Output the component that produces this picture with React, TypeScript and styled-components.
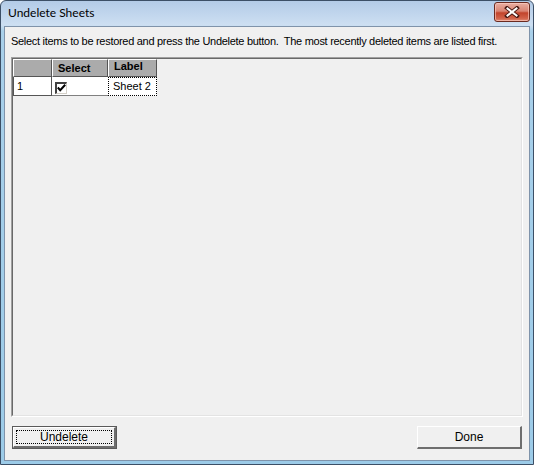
import React from "react";
import styled, { createGlobalStyle } from "styled-components";

const Global = createGlobalStyle`
  html, body { margin: 0; padding: 0; background: #ffffff; }
  #root { width: 534px; height: 465px; }
`;

const Frame = styled.div`
  box-sizing: border-box;
  width: 534px;
  height: 465px;
  border: 1px solid #3c4f66;
  border-radius: 6px 6px 0 0;
  background: linear-gradient(to bottom, #b3cbe7 0px, #cddff2 24px, #a9d0ea 30px, #9ccbe8 100%);
  display: flex;
  flex-direction: column;
  overflow: hidden;
`;

const TitleBar = styled.div`
  height: 24px;
  flex: none;
  display: flex;
  align-items: flex-start;
  justify-content: space-between;
  padding: 0 3px 0 7px;
`;

const TitleText = styled.span`
  font-family: Lato, "Noto Sans", sans-serif;
  font-size: 12px;
  line-height: 14px;
  margin-top: 5px;
  color: #000;
`;

const CloseButton = styled.div`
  box-sizing: border-box;
  width: 36px;
  height: 20px;
  margin-top: 1px;
  border: 1px solid #6a2a20;
  border-radius: 3px;
  background: linear-gradient(to bottom, #e9aea2 0%, #d98473 45%, #c2442c 55%, #d2634a 85%, #e08c76 100%);
  box-shadow: inset 0 0 0 1px rgba(255, 210, 200, 0.6);
  display: flex;
  align-items: center;
  justify-content: center;
`;

const Client = styled.div`
  flex: 1;
  margin: 1px 3px 3px 3px;
  border: 1px solid #7f93aa;
  background: #f0f0f0;
  display: flex;
  flex-direction: column;
  padding: 8px 6px 11px 6px;
  box-sizing: border-box;
  min-height: 0;
`;

const Prompt = styled.div`
  font-family: "Liberation Sans", Arial, sans-serif;
  font-size: 11px;
  line-height: 13px;
  letter-spacing: -0.29px;
  color: #000;
  white-space: pre;
`;

const Panel = styled.div`
  flex: 1;
  margin-top: 9px;
  border-top: 1px solid #a0a0a0;
  border-left: 1px solid #a0a0a0;
  border-right: 1px solid #ffffff;
  border-bottom: 1px solid #ffffff;
  min-height: 0;
`;

const PanelInner = styled.div`
  height: 100%;
  box-sizing: border-box;
  border-top: 1px solid #696969;
  border-left: 1px solid #696969;
  border-right: 1px solid #e3e3e3;
  border-bottom: 1px solid #e3e3e3;
  background: #f0f0f0;
`;

const Grid = styled.div`
  display: grid;
  grid-template-columns: 39px 56px 49px;
  grid-template-rows: 18px 19px;
  font-family: "Liberation Sans", Arial, sans-serif;
  font-size: 11px;
  color: #000;
`;

const HeadCell = styled.div<{ $raised?: boolean }>`
  box-sizing: border-box;
  background: #ababab;
  border-top: 1px solid #ffffff;
  border-left: 1px solid #ffffff;
  border-right: 1px solid #555555;
  border-bottom: 1px solid #555555;
  font-weight: bold;
  line-height: ${(p) => (p.$raised ? "13px" : "16px")};
  padding-left: 5px;
`;

const RowHead = styled.div`
  box-sizing: border-box;
  background: #ffffff;
  border-left: 1px solid #555555;
  border-right: 1px solid #555555;
  border-bottom: 1px solid #555555;
  line-height: 18px;
  padding-left: 3px;
`;

const DataCell = styled.div<{ $focus?: boolean }>`
  box-sizing: border-box;
  background: #ffffff;
  border-bottom: 1px solid ${(p) => (p.$focus ? "transparent" : "#808080")};
  outline: ${(p) => (p.$focus ? "1px dotted #000" : "none")};
  outline-offset: -1px;
  line-height: 17px;
  padding-left: 5px;
  display: flex;
  align-items: center;
`;

const Check = styled.div`
  box-sizing: border-box;
  width: 12px;
  height: 12px;
  margin-left: -2px;
  margin-top: 3px;
  border-top: 2px solid #404040;
  border-left: 2px solid #404040;
  border-right: 1px solid #d4d0c8;
  border-bottom: 1px solid #d4d0c8;
  background: #ffffff;
  display: flex;
  align-items: center;
  justify-content: center;
`;

const ButtonRow = styled.div`
  display: flex;
  justify-content: space-between;
  margin-top: 9px;
  padding: 0 1px 0 1px;
`;

const Button = styled.div<{ $default?: boolean }>`
  box-sizing: border-box;
  width: 105px;
  height: 23px;
  background: #f0f0f0;
  border: ${(p) => (p.$default ? "1px solid #5a5a5a" : "none")};
  font-family: "Liberation Sans", Arial, sans-serif;
  font-size: 11px;
  color: #000;
  display: flex;
`;

const Bevel = styled.div`
  flex: 1;
  box-sizing: border-box;
  border-top: 1px solid #ffffff;
  border-left: 1px solid #ffffff;
  border-right: 2px solid #6e6e6e;
  border-bottom: 2px solid #6e6e6e;
  padding: 2px;
  display: flex;
`;

const Caption = styled.div<{ $focus?: boolean }>`
  flex: 1;
  border: 1px dotted ${(p) => (p.$focus ? "#000" : "transparent")};
  display: flex;
  align-items: center;
  justify-content: center;
  line-height: 13px;
  font-size: 12px;
`;

export default function App() {
  return (
    <>
      <Global />
      <Frame>
        <TitleBar>
          <TitleText>Undelete Sheets</TitleText>
          <CloseButton>
            <svg width="16" height="12" viewBox="0 0 16 12">
              <path d="M3 2 L13 10 M13 2 L3 10" stroke="#4a1a14" strokeWidth="4" strokeLinecap="square" />
              <path d="M3.5 2.5 L12.5 9.5 M12.5 2.5 L3.5 9.5" stroke="#ffffff" strokeWidth="2" strokeLinecap="square" />
            </svg>
          </CloseButton>
        </TitleBar>
        <Client>
          <Prompt>{"Select items to be restored and press the Undelete button.  The most recently deleted items are listed first."}</Prompt>
          <Panel>
            <PanelInner>
              <Grid>
                <HeadCell />
                <HeadCell>Select</HeadCell>
                <HeadCell $raised>Label</HeadCell>
                <RowHead>1</RowHead>
                <DataCell>
                  <Check>
                    <svg width="9" height="8" viewBox="0 0 9 8">
                      <path d="M0.8 3.5 L3.2 6.2 L8.2 0.8" stroke="#000" strokeWidth="2" fill="none" />
                    </svg>
                  </Check>
                </DataCell>
                <DataCell $focus>Sheet 2</DataCell>
              </Grid>
            </PanelInner>
          </Panel>
          <ButtonRow>
            <Button $default>
              <Bevel>
                <Caption $focus>Undelete</Caption>
              </Bevel>
            </Button>
            <Button>
              <Bevel>
                <Caption>Done</Caption>
              </Bevel>
            </Button>
          </ButtonRow>
        </Client>
      </Frame>
    </>
  );
}
